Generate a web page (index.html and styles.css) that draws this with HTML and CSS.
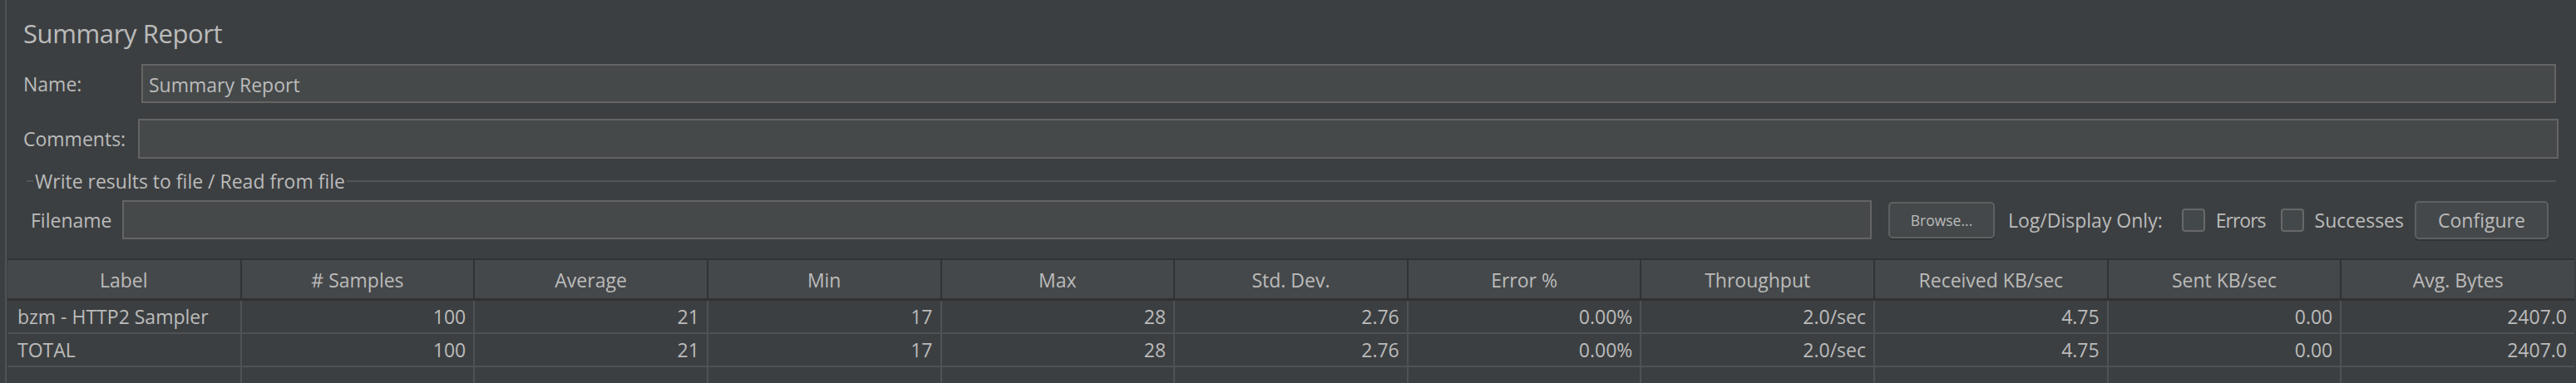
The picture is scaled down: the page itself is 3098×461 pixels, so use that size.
FILE: index.html
```html
<!DOCTYPE html>
<html>
<head>
<meta charset="utf-8">
<link rel="stylesheet" href="styles.css">
</head>
<body>
<div class="frame">
  <div class="title">Summary Report</div>
  <div class="row name-row">
    <label class="lbl name-lbl">Name:</label>
    <div class="field">Summary Report</div>
  </div>
  <div class="row comments-row">
    <label class="lbl comments-lbl">Comments:</label>
    <div class="field"></div>
  </div>
  <div class="group-head">
    <span class="gline short"></span>
    <span class="gtitle">Write results to file / Read from file</span>
    <span class="gline long"></span>
  </div>
  <div class="row file-row">
    <label class="lbl file-lbl">Filename</label>
    <div class="field grow"></div>
    <button class="btn browse">Browse...</button>
    <span class="lbl log-lbl">Log/Display Only:</span>
    <span class="check"></span>
    <span class="lbl chk-lbl errors">Errors</span>
    <span class="check second"></span>
    <span class="lbl chk-lbl">Successes</span>
    <button class="btn configure">Configure</button>
  </div>
  <table class="grid">
    <thead>
      <tr>
        <th>Label</th><th># Samples</th><th>Average</th><th>Min</th><th>Max</th><th>Std. Dev.</th><th>Error %</th><th>Throughput</th><th>Received KB/sec</th><th>Sent KB/sec</th><th>Avg. Bytes</th>
      </tr>
    </thead>
    <tbody>
      <tr>
        <td class="txt">bzm - HTTP2 Sampler</td><td>100</td><td>21</td><td>17</td><td>28</td><td>2.76</td><td>0.00%</td><td>2.0/sec</td><td>4.75</td><td>0.00</td><td>2407.0</td>
      </tr>
      <tr>
        <td class="txt">TOTAL</td><td>100</td><td>21</td><td>17</td><td>28</td><td>2.76</td><td>0.00%</td><td>2.0/sec</td><td>4.75</td><td>0.00</td><td>2407.0</td>
      </tr>
      <tr class="empty">
        <td></td><td></td><td></td><td></td><td></td><td></td><td></td><td></td><td></td><td></td><td></td>
      </tr>
    </tbody>
  </table>
</div>
</body>
</html>
```
FILE: styles.css
```css
html, body {
  margin: 0;
  padding: 0;
}
body {
  width: 3098px;
  height: 461px;
  overflow: hidden;
  background: #3c3f41;
  color: #bbbbbb;
  font-family: "Open Sans", "Noto Sans", sans-serif;
  font-size: 23px;
}
.frame {
  margin-left: 6px;
  border-left: 2px solid #505356;
  height: 461px;
  box-sizing: border-box;
  display: flex;
  flex-direction: column;
}
.title {
  margin-top: 20px;
  padding-left: 20px;
  font-size: 31px;
  letter-spacing: -0.4px;
  line-height: 40px;
  height: 40px;
}
.row {
  display: flex;
  align-items: center;
}
.lbl {
  white-space: nowrap;
  line-height: 30px;
}
.field {
  box-sizing: border-box;
  background: #45494a;
  border: 2px solid #646464;
  padding: 3px 7px 0;
  line-height: 40px;
  white-space: nowrap;
}
.name-row {
  margin-top: 17px;
  height: 47px;
  padding-left: 20px;
  padding-right: 24px;
}
.name-row .field {
  flex: 1;
  height: 47px;
}
.name-lbl {
  width: 142px;
}
.comments-row {
  margin-top: 19px;
  height: 48px;
  padding-left: 20px;
  padding-right: 21px;
}
.comments-row .field {
  flex: 1;
  height: 48px;
}
.comments-lbl {
  width: 138px;
}
.group-head {
  margin-top: 15px;
  height: 24px;
  display: flex;
  align-items: center;
  padding-left: 24px;
  padding-right: 24px;
}
.gline {
  height: 2px;
  background: #535658;
}
.gline.short {
  width: 8px;
  margin-right: 2px;
}
.gline.long {
  flex: 1;
  margin-left: 2px;
}
.gtitle {
  line-height: 24px;
  white-space: nowrap;
}
.file-row {
  margin-top: 11px;
  height: 47px;
  padding-left: 29px;
  padding-right: 33px;
}
.file-lbl {
  width: 110px;
}
.field.grow {
  flex: 1;
  height: 47px;
}
.btn {
  box-sizing: border-box;
  font-family: "Open Sans", "Noto Sans", sans-serif;
  color: #bbbbbb;
  background: #44484a;
  border: 2px solid #5e6162;
  border-radius: 5px;
  box-shadow: 0 2px 0 #323436;
  padding: 0;
  white-space: nowrap;
}
.browse {
  margin-left: 20px;
  width: 128px;
  height: 44px;
  font-size: 17.5px;
}
.log-lbl {
  margin-left: 16px;
}
.check {
  box-sizing: border-box;
  width: 28px;
  height: 28px;
  margin-left: 23px;
  border: 2px solid #666869;
  border-radius: 4px;
  background: #43494a;
}
.check.second {
  margin-left: 18px;
}
.chk-lbl {
  margin-left: 13px;
}
.chk-lbl.errors {
  letter-spacing: -1px;
}
.configure {
  margin-left: 13px;
  width: 161px;
  height: 46px;
  font-size: 23px;
}
.grid {
  margin-top: 23px;
  margin-left: 1px;
  width: 3087px;
  border-collapse: collapse;
  table-layout: fixed;
}
.grid th {
  background: #45484a;
  font-weight: normal;
  text-align: center;
  height: 48px;
  padding: 3px 0 0;
  line-height: 30px;
  border-top: 2px solid #303234;
  border-bottom: 3px solid #303234;
  border-left: 2px solid #303234;
  box-sizing: border-box;
  white-space: nowrap;
}
.grid th:first-child {
  border-left: none;
}
.grid td {
  height: 38px;
  padding: 0 9px 0 12px;
  line-height: 30px;
  text-align: right;
  border-left: 2px solid #4f5254;
  border-bottom: 2px solid #4f5254;
  white-space: nowrap;
}
.grid td:first-child {
  border-left: none;
}
.grid td.txt {
  text-align: left;
}
.grid tr.empty td {
  height: 30px;
}
```
